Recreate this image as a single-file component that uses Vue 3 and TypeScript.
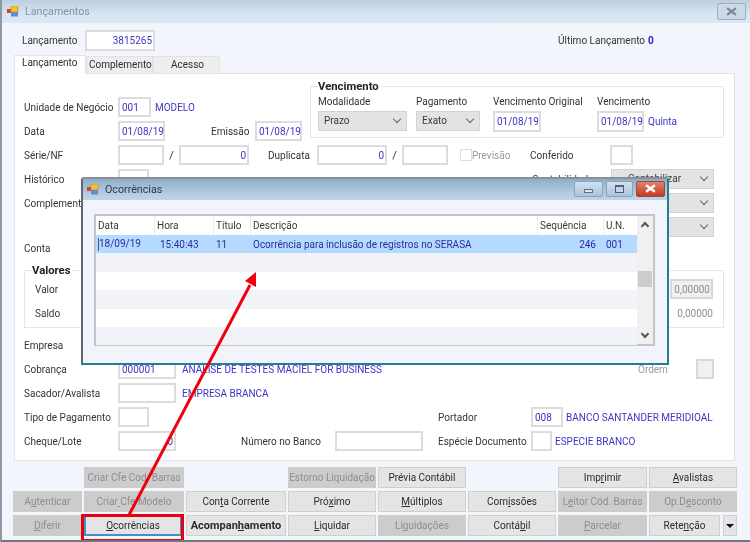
<script setup lang="ts">
interface Btn { t: string; off?: boolean; bold?: boolean; focus?: boolean; empty?: boolean }
const buttons: Btn[] = [
  { t: '', empty: true }, { t: 'Criar Cfe Cod. Barras', off: true }, { t: '', empty: true }, { t: 'Estorno Liquidação', off: true },
  { t: 'Prévia Contábil' }, { t: '', empty: true }, { t: 'Imp&rimir' }, { t: '&Avalistas' },
  { t: 'A&utenticar', off: true }, { t: 'Criar& Cfe Modelo', off: true }, { t: 'Con&ta Corrente' }, { t: 'Pró&ximo' },
  { t: '&Múltiplos' }, { t: 'Com&issões' }, { t: 'L&eitor Cód. Barras', off: true }, { t: 'Op.D&esconto', off: true },
  { t: '&Diferir', off: true }, { t: '&Ocorrências', focus: true }, { t: 'Acompan&hamento', bold: true }, { t: '&Liquidar' },
  { t: 'Li&quidações', off: true }, { t: 'Contá&bil' }, { t: '&Parcelar', off: true }
]
const parts = (s: string) => {
  const i = s.indexOf('&')
  if (i < 0) return { a: s, u: '', b: '' }
  return { a: s.slice(0, i), u: s.charAt(i + 1), b: s.slice(i + 2) }
}
const rows = [0, 1, 2, 3, 4]
const columns = [
  { t: 'Data', c: 'c-data' }, { t: 'Hora', c: 'c-hora' }, { t: 'Título', c: 'c-tit' },
  { t: 'Descrição', c: 'c-desc' }, { t: 'Sequência', c: 'c-seq' }, { t: 'U.N.', c: 'c-un' }
]
</script>

<template>
  <div class="win">
    <header class="titlebar">
      <svg class="appicon" viewBox="0 0 12 11" width="12" height="11">
        <rect x="0" y="3" width="4" height="4" fill="#d8452c" />
        <rect x="4" y="0" width="7" height="6" fill="#f2c230" stroke="#b98a12" stroke-width=".6" />
        <rect x="4" y="6" width="7" height="4.5" fill="#5d8fd0" />
      </svg>
      <span class="wintitle">Lançamentos</span>
      <span class="winclose">
        <svg viewBox="0 0 10 8" width="11" height="9"><path d="M1 1l8 6M9 1L1 7" stroke="#7d8790" stroke-width="2" fill="none" /></svg>
      </span>
    </header>

    <div class="head">
      <label class="lab w63">Lançamento</label>
      <div class="in w70 h21 num blue">3815265</div>
      <label class="lab ultimo">Último Lançamento</label>
      <b class="zero">0</b>
    </div>

    <nav class="tabs">
      <span class="tab active">Lançamento</span>
      <span class="tab t67">Complemento</span>
      <span class="tab t67 center">Acesso</span>
    </nav>

    <section class="panel">
      <div class="top">
        <div class="topleft">
          <div class="row">
            <label class="lab w94">Unidade de Negócio</label>
            <div class="in w33 blue">001</div>
            <span class="link ml4">MODELO</span>
          </div>
          <div class="row">
            <label class="lab w94">Data</label>
            <div class="in w47 blue">01/08/19</div>
            <label class="lab ml46 w44">Emissão</label>
            <div class="in w47 blue">01/08/19</div>
          </div>
        </div>
        <fieldset class="venc">
          <span class="legend">Vencimento</span>
          <div class="vcol w98"><label class="lab">Modalidade</label><div class="sel w89"><span>Prazo</span><i class="chev"></i></div></div>
          <div class="vcol w77"><label class="lab">Pagamento</label><div class="sel w64"><span>Exato</span><i class="chev"></i></div></div>
          <div class="vcol w104"><label class="lab">Vencimento Original</label><div class="in w48 h21 blue">01/08/19</div></div>
          <div class="vcol"><label class="lab">Vencimento</label>
            <div class="inline"><div class="in w47 h21 blue">01/08/19</div><span class="link ml4">Quinta</span></div>
          </div>
        </fieldset>
      </div>

      <div class="row">
        <label class="lab w94">Série/NF</label>
        <div class="in w46"></div>
        <span class="slash">/</span>
        <div class="in w70 num blue">0</div>
        <label class="lab ml19 w49">Duplicata</label>
        <div class="in w70 num blue">0</div>
        <span class="slash">/</span>
        <div class="in w46"></div>
        <i class="check"></i>
        <label class="lab dim w58">Previsão</label>
        <label class="lab w80">Conferido</label>
        <div class="in w23"></div>
      </div>
      <div class="row">
        <label class="lab w94">Histórico</label>
        <div class="in w31"></div>
        <label class="lab contab">Contabilidade</label>
        <div class="sel w103 indent"><span>Contabilizar</span><i class="chev"></i></div>
      </div>
      <div class="row">
        <label class="lab w94">Complemento</label>
        <div class="spacer"></div>
        <div class="sel w103"><i class="chev"></i></div>
      </div>
      <div class="row">
        <div class="spacer"></div>
        <div class="sel w103"><i class="chev"></i></div>
      </div>
      <div class="row conta"><label class="lab">Conta</label></div>

      <fieldset class="valores">
        <span class="legend">Valores</span>
        <div class="vrow"><label class="lab">Valor</label><div class="in w43 num grey">0,00000</div></div>
        <div class="vrow"><label class="lab">Saldo</label><span class="plain">0,00000</span></div>
      </fieldset>

      <div class="row"><label class="lab w94">Empresa</label></div>
      <div class="row">
        <label class="lab w94">Cobrança</label>
        <div class="in w58 blue">000001</div>
        <span class="link ml6">ANALISE DE TESTES MACIEL FOR BUSINESS</span>
        <div class="spacer"></div>
        <label class="lab dim w58">Ordem</label>
        <div class="in w18 grey"></div>
      </div>
      <div class="row">
        <label class="lab w94">Sacador/Avalista</label>
        <div class="in w58"></div>
        <span class="link ml6">EMPRESA BRANCA</span>
      </div>
      <div class="row">
        <label class="lab w94">Tipo de Pagamento</label>
        <div class="in w31"></div>
        <label class="lab ml289 w93">Portador</label>
        <div class="in w32 blue">008</div>
        <span class="link ml3">BANCO SANTANDER MERIDIOAL</span>
      </div>
      <div class="row">
        <label class="lab w94">Cheque/Lote</label>
        <div class="in w58 num blue">0</div>
        <label class="lab ml65 w94">Número no Banco</label>
        <div class="in w88"></div>
        <label class="lab ml15 w93">Espécie Documento</label>
        <div class="in w21"></div>
        <span class="link ml3">ESPECIE BRANCO</span>
      </div>
    </section>

    <div class="buttons">
      <template v-for="(b, i) in buttons" :key="i">
        <div v-if="b.empty"></div>
        <button v-else class="btn" :class="{ off: b.off, bold: b.bold, focus: b.focus }">{{ parts(b.t).a }}<u>{{ parts(b.t).u }}</u>{{ parts(b.t).b }}</button>
      </template>
      <div class="lastcell">
        <button class="btn grow">Rete<u>n</u>ção</button>
        <button class="btn drop"><i class="tri"></i></button>
      </div>
    </div>

    <!-- modal dialog -->
    <div class="dialog">
      <header class="dtitle">
        <svg class="appicon" viewBox="0 0 12 11" width="12" height="11">
          <rect x="0" y="3" width="4" height="4" fill="#d8452c" />
          <rect x="4" y="0" width="7" height="6" fill="#f2c230" stroke="#b98a12" stroke-width=".6" />
          <rect x="4" y="6" width="7" height="4.5" fill="#5d8fd0" />
        </svg>
        <span class="dname">Ocorrências</span>
        <span class="ctl w29"><i class="minbar"></i></span>
        <span class="ctl w27"><i class="maxbox"></i></span>
        <span class="ctl w29 red">
          <svg viewBox="0 0 10 8" width="11" height="9"><path d="M1 1l8 6M9 1L1 7" stroke="#fff" stroke-width="2.2" fill="none" /></svg>
        </span>
      </header>
      <div class="list">
        <div class="listmain">
          <div class="lhead"><span v-for="c in columns" :key="c.t" class="hc" :class="c.c">{{ c.t }}</span></div>
          <div class="lrow sel-row">
            <span class="c-data cell"><i class="caret"></i>18/09/19</span>
            <span class="c-hora cell ind">15:40:43</span>
            <span class="c-tit cell">11</span>
            <span class="c-desc cell">Ocorrência para inclusão de registros no SERASA</span>
            <span class="c-seq cell right">246</span>
            <span class="c-un cell">001</span>
          </div>
          <div v-for="r in rows" :key="r" class="lrow" :class="{ alt: r % 2 === 0 }"></div>
        </div>
        <div class="scroll">
          <i class="up"></i>
          <div class="track"><span class="thumb"></span></div>
          <i class="down"></i>
        </div>
      </div>
    </div>

    <!-- annotation -->
    <span class="redbox"></span>
    <svg class="arrow" width="750" height="542" viewBox="0 0 750 542">
      <line x1="129" y1="515" x2="250" y2="285" stroke="#f0000c" stroke-width="3" />
      <polygon points="256,272 256,287 245,281" fill="#f0000c" />
    </svg>
  </div>
</template>

<style>
html, body { margin: 0; background: #f3f5fb; }
</style>

<style scoped>
* { box-sizing: border-box; }
.win {
  position: relative; width: 750px; height: 542px; overflow: hidden;
  background: #f2f5fb; border-left: 2px solid #8d98a3;
  border-bottom: 2px solid #6f7780;
  font: 10px Roboto, "Liberation Sans", Arial, sans-serif; color: #2e2e2e;
  filter: blur(.5px);
}
.titlebar { height: 23px; display: flex; align-items: center; padding: 0 4px 0 5px;
  background: linear-gradient(#bccfdf, #d8e5f2 60%, #dbe7f3); }
.appicon { flex: none; }
.wintitle { margin-left: 6px; font-size: 10.7px; color: #87949d; flex: 1; }
.winclose { width: 29px; height: 17px; border: 1px solid #a0acb8; border-radius: 2px; display: flex; align-items: center; justify-content: center; background: #ccd9e6; }
.head { height: 32px; display: flex; align-items: center; padding: 2px 0 0 20px; }
.w63 { width: 63px; }
.in { height: 20px; border: 2px solid #dcdcdc; background: #fff; color: #3d35c4; padding: 3px 1px 0 2px; flex: none; white-space: nowrap; }
.h21 { height: 21px; }
.num { text-align: right; }
.blue { color: #3d35c4; }
.grey { background: #f0f0f0; color: #8d8d8d; border-color: #d8d8d8; }
.ultimo { margin-left: 403px; width: 90px; }
.zero { color: #2020e0; }
.lab { flex: none; white-space: nowrap; color: #333; }
.dim { color: #9a9a9a; }
.tabs { display: flex; margin: 0 0 0 12px; height: 18px; align-items: flex-end; }
.tab { height: 17px; background: #eeeeee; border: 1px solid #e2e2e2; border-bottom: 0; padding: 2px 0 0 2px; width: 67px; }
.center { text-align: center; }
.tab.active { height: 19px; width: 72px; background: #fff; padding: 1px 0 0 7px; position: relative; z-index: 1; border-color: #e4e4e4; margin-bottom: -1px; }
.panel { margin-left: 12px; width: 721px; height: 388px; background: #fff; border: 1px solid #e4e4e4; padding: 12px 0 0 9px; }
.top { display: flex; height: 57px; }
.topleft { width: 286px; padding-top: 9px; flex: none; }
.row { display: flex; align-items: center; height: 24px; padding-right: 20px; }
.topleft .row { padding-right: 0; }
.conta { height: 20px; margin-top: -1px; }
.w94 { width: 94px; } .w33 { width: 33px; } .w47 { width: 47px; } .w44 { width: 44px; } .w48 { width: 48px; }
.w46 { width: 46px; } .w70 { width: 70px; } .w49 { width: 49px; } .w58 { width: 58px; } .w80 { width: 80px; }
.w23 { width: 23px; } .w31 { width: 31px; } .w18 { width: 18px; } .w43 { width: 43px; }
.w88 { width: 88px; } .w93 { width: 93px; } .w32 { width: 32px; } .w21 { width: 21px; } .w89 { width: 89px; }
.w64 { width: 64px; } .w103 { width: 103px; } .w98 { width: 98px; } .w77 { width: 77px; } .w104 { width: 104px; }
.ml3 { margin-left: 3px; } .ml4 { margin-left: 4px; } .ml6 { margin-left: 6px; } .ml15 { margin-left: 15px; }
.ml19 { margin-left: 19px; } .ml46 { margin-left: 46px; } .ml65 { margin-left: 65px; } .ml289 { margin-left: 289px; }
.link { color: #3d35c4; white-space: nowrap; }
.slash { width: 15px; text-align: center; flex: none; font-size: 11px; }
.check { width: 12px; height: 12px; border: 1px solid #dedede; background: #fff; margin-left: 12px; flex: none; }
.spacer { flex: 1; }
.venc { position: relative; margin: 0; width: 414px; height: 52px; border: 1px solid #e6e6e6; padding: 9px 0 0 7px; display: flex; min-width: 0; }
.legend { position: absolute; left: 7px; top: -7px; background: #fff; padding-right: 2px; font-weight: 700; color: #222; font-size: 11.3px; }
.vcol { flex: none; display: flex; flex-direction: column; gap: 3px; }
.vcol .lab { height: 12px; line-height: 12px; }
.inline { display: flex; align-items: center; }
.sel { position: relative; height: 20px; background: #e3e3e3; border: 1px solid #d3d3d3; padding: 3px 0 0 5px; flex: none; color: #3a3a3a; }
.indent { padding-left: 16px; }
.chev { position: absolute; right: 6px; top: 4px; width: 6px; height: 6px; border-right: 1px solid #666; border-bottom: 1px solid #666; transform: rotate(45deg); }
.contab { margin-left: 383px; width: 79px; }
.valores { position: relative; margin: 12px 0 0 0; width: 700px; height: 58px; min-width: 0; border: 1px solid #e6e6e6; padding: 6px 10px 0 10px; }
.valores .legend { left: 7px; }
.vrow { display: flex; align-items: center; justify-content: space-between; height: 24px; }
.plain { color: #8d8d8d; }
.valores + .row { margin-top: 5px; }
.buttons { display: grid; margin: 6px 0 0 11px; grid-template-columns: 69px 100px 100px 88px 88px 88px 89px 88px; column-gap: 2px; grid-auto-rows: 21px; row-gap: 3px; }
.btn { font: inherit; margin: 0; padding: 0; height: 21px; min-width: 0; background: #e4e4e4; border: 1px solid #cfcfcf; color: #2b2b2b; white-space: nowrap; }
.btn.off { background: #cccccc; border-color: #cccccc; color: #8d8d8d; }
.btn.bold { font-weight: 700; font-size: 11px; }
.btn.focus { border: 2px solid #3f8fd2; width: 98px; }
.lastcell { display: flex; gap: 3px; }
.grow { flex: 1; }
.drop { width: 14px; flex: none; display: flex; align-items: center; justify-content: center; }
.tri { width: 0; height: 0; border: 4px solid transparent; border-top-color: #111; border-bottom: 0; }
.dialog { position: absolute; left: 79px; top: 177px; width: 588px; height: 188px; background: #f1f4fb;
  border: 2px solid #6f8792; border-top-color: #8a8f94; border-right-color: #1f7f94; border-bottom-color: #1f7f94; border-radius: 3px 3px 0 0; border-left-color: #5a6a72; }
.dtitle { height: 21px; display: flex; align-items: center; padding: 0 2px 0 4px; background: linear-gradient(#8eadcc, #b4cce3 70%, #bfd4e8); }
.dname { margin-left: 6px; flex: 1; font-size: 10.7px; color: #2f3a44; }
.ctl { height: 16px; margin: 0 0 2px 3px; border: 1px solid #8ba3ba; border-radius: 2px; background: linear-gradient(#d3e2f0, #aac3da); display: flex; align-items: center; justify-content: center; flex: none; }
.w29 { width: 29px; } .w27 { width: 27px; }
.red { background: linear-gradient(#e2806c, #c23a25); border-color: #9c4a3c; }
.minbar { width: 9px; height: 4px; background: #dde6ee; border: 1px solid #5f6f7e; margin-top: 4px; }
.maxbox { width: 9px; height: 8px; border: 1px solid #4f6070; border-top-width: 2px; background: #c4d6e6; }
.list { display: flex; margin: 14px 0 0 11px; width: 561px; height: 132px; border: 2px solid #c2c4c6; background: #fff; }
.listmain { flex: 1; min-width: 0; }
.lhead { display: flex; height: 19px; background: #fff; align-items: center; }
.hc { color: #3a3a3a; border-right: 1px solid #ececec; height: 19px; line-height: 19px; padding-left: 2px; flex: none; }
.c-data { width: 59px; } .c-hora { width: 59px; } .c-tit { width: 37px; }
.c-desc { width: 287px; } .c-seq { width: 66px; } .c-un { width: 33px; border-right: 0; }
.lrow { display: flex; height: 18.4px; align-items: center; background: #fff; }
.alt { background: #f2f3f8; }
.sel-row { background: #b4daff; color: #2c2c9a; }
.cell { flex: none; padding-left: 2px; white-space: nowrap; position: relative; }
.ind { padding-left: 5px; }
.right { text-align: right; padding-right: 8px; }
.caret { display: inline-block; width: 1px; height: 13px; background: #555; vertical-align: middle; }
.scroll { width: 16px; flex: none; background: #f0f0f0; display: flex; flex-direction: column; align-items: center; position: relative; }
.up, .down { width: 6px; height: 6px; border-left: 2px solid #555; border-top: 2px solid #555; transform: rotate(45deg); margin-top: 7px; flex: none; }
.down { transform: rotate(225deg); margin: 0 0 7px; }
.track { flex: 1; width: 100%; padding: 42px 1px 0; }
.thumb { display: block; height: 16px; background: #cdcdcd; }
.redbox { position: absolute; left: 79px; top: 514px; width: 103px; height: 28px; border: 3px solid #e8000b; }
.arrow { position: absolute; left: -2px; top: 0; pointer-events: none; }
</style>
